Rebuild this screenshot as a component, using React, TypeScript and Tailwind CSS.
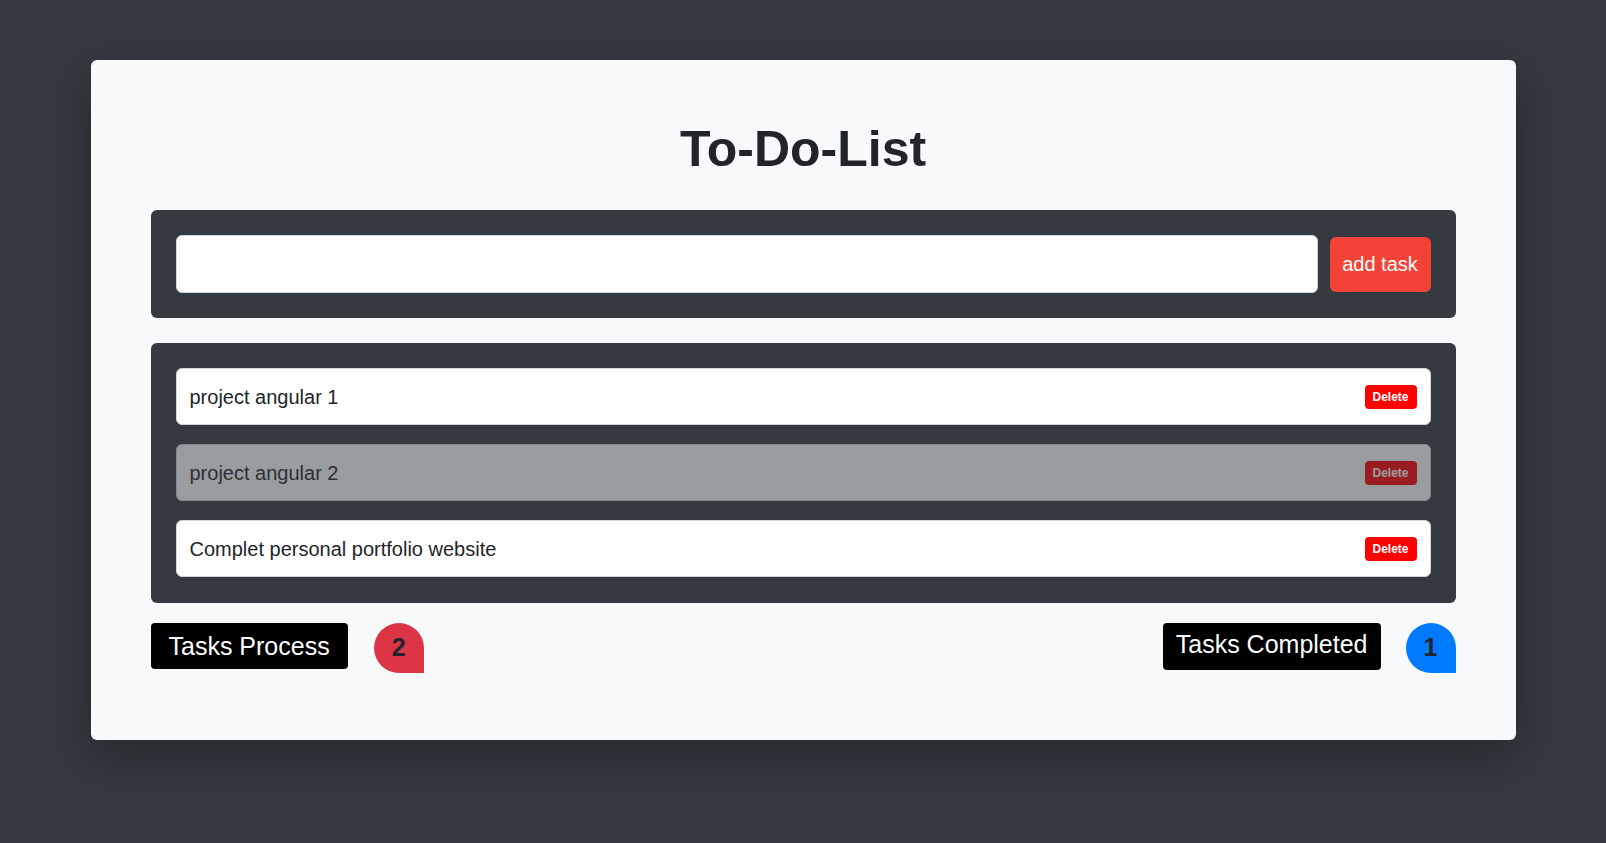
const tasks = [
  { id: 1, title: "project angular 1", done: false },
  { id: 2, title: "project angular 2", done: true },
  { id: 3, title: "Complet personal portfolio website", done: false },
];

export default function App() {
  const open = tasks.filter((t) => !t.done).length;
  const completed = tasks.filter((t) => t.done).length;

  return (
    <div className="min-h-[843px] bg-[#343a40] pt-[60px] font-['Liberation_Sans',Arial,sans-serif]">
      <div className="mx-auto w-[1425px] rounded-md bg-[#f8f9fa] px-[60px] pt-[60px] pb-[67px] shadow-[0_16px_48px_rgba(0,0,0,0.3)]">
        <h1 className="mb-[31px] text-center text-[50px] font-bold leading-[59px] text-[#212529]">
          To-Do-List
        </h1>

        <div className="flex items-center gap-3 rounded-md bg-[#343a40] p-[25px]">
          <input
            type="text"
            className="h-[58px] flex-1 rounded-md border border-gray-300 bg-white px-3 text-xl outline-none"
          />
          <button className="h-[55px] w-[101px] rounded-md bg-[#f44336] text-xl text-white">
            add task
          </button>
        </div>

        <div className="mt-[25px] flex flex-col gap-[19px] rounded-md bg-[#343a40] px-[25px] pt-[25px] pb-[26px]">
          {tasks.map((t) => (
            <div
              key={t.id}
              className={
                "flex h-[57px] items-center justify-between rounded-md border border-gray-300 bg-white px-[13px] " +
                (t.done ? "opacity-50" : "")
              }
            >
              <span className="text-xl text-[#212529]">{t.title}</span>
              <button className="flex h-6 w-[52px] items-center justify-center rounded bg-[#ff0000] text-xs font-bold text-white">
                Delete
              </button>
            </div>
          ))}
        </div>

        <div className="mt-5 flex items-start justify-between">
          <div className="flex items-start gap-[26px]">
            <div className="flex h-[46px] items-center rounded bg-black px-[18px] text-[25px] leading-none text-white">
              Tasks Process
            </div>
            <div className="flex h-[50px] w-[50px] items-center justify-center rounded-tl-full rounded-tr-full rounded-bl-full bg-[#dc3545] text-[25px] font-bold text-[#212529]">
              {open}
            </div>
          </div>
          <div className="flex items-start gap-[25px]">
            <div className="flex h-[47px] items-center rounded bg-black px-[13px] pb-[5px] text-[25px] leading-none text-white">
              Tasks Completed
            </div>
            <div className="flex h-[50px] w-[50px] items-center justify-center rounded-tl-full rounded-tr-full rounded-bl-full bg-[#007bff] text-[25px] font-bold text-[#212529]">
              {completed}
            </div>
          </div>
        </div>
      </div>
    </div>
  );
}
